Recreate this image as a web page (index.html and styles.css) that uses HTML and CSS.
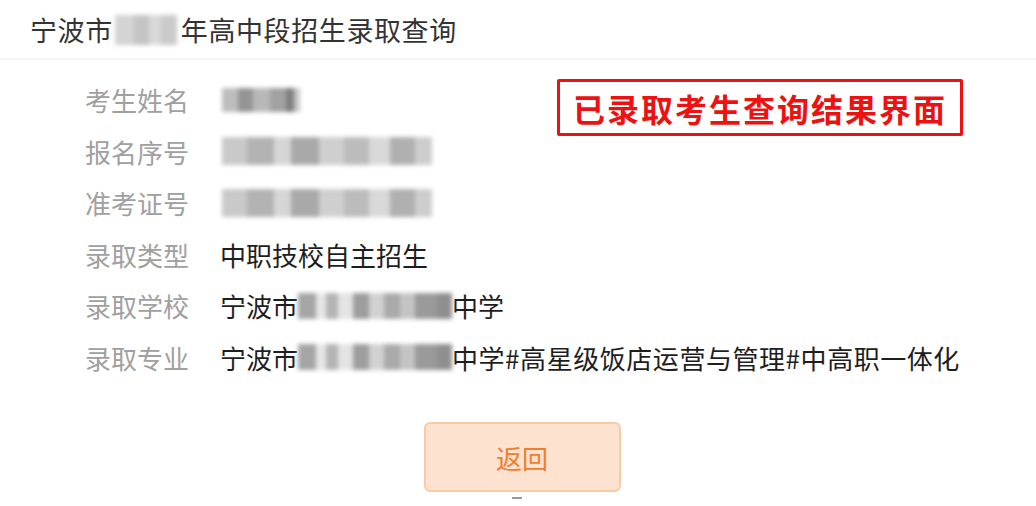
FILE: index.html
```html
<!DOCTYPE html>
<html lang="zh-CN">
<head>
    <meta charset="UTF-8">
    <meta name="viewport" content="width=device-width, initial-scale=1.0">
    <title>录取查询结果</title>
    <link rel="stylesheet" href="styles.css">
</head>
<body>
    <div class="page">
        <!-- 页头 -->
        <div class="header">
            <h1>宁波市<span class="mask mask-year"></span>年高中段招生录取查询</h1>
        </div>

        <!-- 考生录取信息 -->
        <div class="info">
            <div class="row">
                <span class="label">考生姓名</span>
                <span class="mask mask-name"></span>
            </div>
            <div class="row">
                <span class="label">报名序号</span>
                <span class="mask mask-long"></span>
            </div>
            <div class="row">
                <span class="label">准考证号</span>
                <span class="mask mask-long"></span>
            </div>
            <div class="row">
                <span class="label">录取类型</span>
                <span class="value">中职技校自主招生</span>
            </div>
            <div class="row">
                <span class="label">录取学校</span>
                <span class="value">宁波市<span class="mask mask-school"></span>中学</span>
            </div>
            <div class="row">
                <span class="label">录取专业</span>
                <span class="value">宁波市<span class="mask mask-school"></span><span class="major">中学#高星级饭店运营与管理#中高职一体化</span></span>
            </div>
        </div>

        <div class="tag">已录取考生查询结果界面</div>

        <div class="actions">
            <button type="button" class="back-btn">返回</button>
        </div>
        <div class="dash"></div>
    </div>
</body>
</html>
```

FILE: styles.css
```css
/* Global Styles */
* {
    box-sizing: border-box;
    margin: 0;
    padding: 0;
}

body {
    font-family: "Noto Sans CJK SC", "Noto Sans", sans-serif;
    background: #ffffff;
    color: #222;
}

.page {
    position: relative;
    width: 1036px;
    height: 506px;
    overflow: hidden;
}

/* Header */
.header {
    height: 60px;
    padding-left: 30px;
    border-bottom: 2px solid #f4f4f4;
}

.header h1 {
    font-size: 27px;
    font-weight: normal;
    color: #333;
    line-height: 60px;
    letter-spacing: 0.6px;
    display: flex;
    align-items: center;
}

/* Info rows */
.info {
    padding-left: 85px;
    margin-top: 14px;
}

.row {
    display: flex;
    align-items: center;
    height: 51.5px;
    font-size: 26px;
}

.label {
    width: 135px;
    flex-shrink: 0;
    color: #a0a0a0;
}

.value {
    display: flex;
    align-items: center;
    color: #1e1e1e;
}

.major {
    letter-spacing: 0.55px;
}

/* Blurred personal data */
.mask {
    display: inline-block;
    filter: blur(2px);
    background:
        linear-gradient(90deg,
            #c9c9c9 0 12%, #b3b3b3 12% 25%, #d6d6d6 25% 33%,
            #a9a9a9 33% 46%, #cfcfcf 46% 58%, #bcbcbc 58% 70%,
            #d9d9d9 70% 80%, #b0b0b0 80% 92%, #cdcdcd 92% 100%);
}

.mask-year {
    width: 62px;
    height: 30px;
    margin: 0 4px 0 2px;
    background:
        linear-gradient(90deg, #d4d4d4 0 30%, #c4c4c4 30% 55%, #d9d9d9 55% 75%, #cacaca 75% 100%);
}

.mask-name {
    width: 78px;
    height: 24px;
    margin-left: 2px;
    background:
        linear-gradient(90deg, #bdbdbd 0 20%, #959595 20% 40%, #b8b8b8 40% 62%, #a2a2a2 62% 82%, #7f7f7f 82% 92%, #c8c8c8 92% 100%);
}

.mask-long {
    width: 210px;
    height: 28px;
    margin-left: 2px;
}

.mask-school {
    width: 154px;
    height: 26px;
    background:
        linear-gradient(90deg,
            #a5a5a5 0 12%, #e6e6e6 12% 18%, #b4b4b4 18% 26%, #e4e4e4 26% 36%,
            #9d9d9d 36% 46%, #d2d2d2 46% 56%, #aaaaaa 56% 66%, #c4c4c4 66% 76%,
            #9a9a9a 76% 90%, #8f8f8f 90% 100%);
}

/* Annotation box */
.tag {
    position: absolute;
    left: 557px;
    top: 79px;
    width: 406px;
    height: 57px;
    border: 3px solid #ee1111;
    border-radius: 2px;
    color: #ee1111;
    font-size: 32px;
    font-weight: bold;
    letter-spacing: 2px;
    display: flex;
    align-items: center;
    justify-content: center;
}

/* Button */
.actions {
    display: flex;
    justify-content: center;
    padding-left: 8px;
    margin-top: 39px;
}

.back-btn {
    width: 197px;
    height: 70px;
    background-color: #fde3cf;
    border: 2px solid #f8cba6;
    border-radius: 6px;
    color: #f07c2c;
    font-family: inherit;
    font-size: 26px;
    cursor: pointer;
}

.dash {
    width: 10px;
    height: 2px;
    margin: 5px auto 0;
    position: relative;
    left: -1px;
    background: #999;
}
```
